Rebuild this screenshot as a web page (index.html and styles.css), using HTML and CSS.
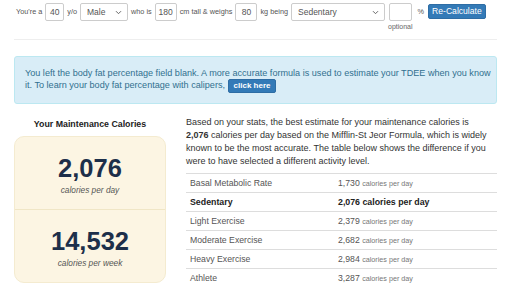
FILE: index.html
```html
<!DOCTYPE html>
<html lang="en">

<head>
    <meta charset="UTF-8">
    <title>TDEE Calculator</title>
    <link rel="stylesheet" href="styles.css">
</head>

<body>
    <div class="page">
        <!--计算表单-->
        <form class="calc">
            <span class="lbl">You're a</span>
            <input class="field w-age" type="text" value="40">
            <span class="lbl">y/o</span>
            <div class="select w-sex">
                <span>Male</span>
                <svg width="7" height="5" viewBox="0 0 7 5"><path d="M1 1.2 3.5 3.7 6 1.2" fill="none" stroke="#666" stroke-width="1"/></svg>
            </div>
            <span class="lbl">who is</span>
            <input class="field w-num" type="text" value="180">
            <span class="lbl">cm tall &amp; weighs</span>
            <input class="field w-num" type="text" value="80">
            <span class="lbl">kg being</span>
            <div class="select w-act">
                <span>Sedentary</span>
                <svg width="7" height="5" viewBox="0 0 7 5"><path d="M1 1.2 3.5 3.7 6 1.2" fill="none" stroke="#666" stroke-width="1"/></svg>
            </div>
            <div class="opt">
                <input class="field w-fat" type="text" value="">
                <span class="opt-note">optional</span>
            </div>
            <span class="lbl pct">%</span>
            <button class="btn btn-calc" type="button">Re-Calculate</button>
        </form>

        <hr class="rule">

        <div class="alert">
            You left the body fat percentage field blank. A more accurate formula is used to estimate your TDEE when you know<br>
            it. To learn your body fat percentage with calipers, <a class="btn btn-small" href="#">click here</a>
        </div>

        <div class="result">
            <!--左边的卡片-->
            <div class="side">
                <h4>Your Maintenance Calories</h4>
                <div class="card">
                    <div class="card-part">
                        <div class="big">2,076</div>
                        <div class="unit">calories per day</div>
                    </div>
                    <div class="card-part">
                        <div class="big">14,532</div>
                        <div class="unit">calories per week</div>
                    </div>
                </div>
            </div>
            <!--右边的说明和表格-->
            <div class="main">
                <p>Based on your stats, the best estimate for your maintenance calories is
                    <b>2,076</b> calories per day based on the Mifflin-St Jeor Formula, which is widely
                    known to be the most accurate. The table below shows the difference if you
                    were to have selected a different activity level.</p>
                <table class="levels">
                    <tr><td>Basal Metabolic Rate</td><td>1,730 <small>calories per day</small></td></tr>
                    <tr class="current"><td>Sedentary</td><td>2,076 calories per day</td></tr>
                    <tr><td>Light Exercise</td><td>2,379 <small>calories per day</small></td></tr>
                    <tr><td>Moderate Exercise</td><td>2,682 <small>calories per day</small></td></tr>
                    <tr><td>Heavy Exercise</td><td>2,984 <small>calories per day</small></td></tr>
                    <tr><td>Athlete</td><td>3,287 <small>calories per day</small></td></tr>
                </table>
            </div>
        </div>
    </div>
</body>

</html>
```

FILE: styles.css
```css
* {
    margin: 0;
    padding: 0;
    box-sizing: border-box;
}

body {
    font-family: "Liberation Sans", Arial, sans-serif;
    color: #333;
    background: #fff;
}

.page {
    padding: 3px 15px 0 14px;
}

.calc {
    display: flex;
    align-items: flex-start;
    gap: 3px;
    padding-left: 2px;
    height: 36px;
}

.lbl {
    font-size: 7.3px;
    line-height: 18px;
    color: #555;
}

.pct {
    margin-left: 2px;
}

.field {
    height: 18px;
    border: 1px solid #ccc;
    border-radius: 2px;
    font-family: inherit;
    font-size: 8.5px;
    color: #555;
    text-align: center;
    outline: none;
}

.w-age {
    width: 19px;
}

.w-num {
    width: 22px;
}

.w-fat {
    width: 23px;
}

.select {
    height: 18px;
    border: 1px solid #ccc;
    border-radius: 2px;
    display: flex;
    align-items: center;
    justify-content: space-between;
    padding: 0 5px 0 6px;
    font-size: 8.5px;
    color: #555;
}

.w-sex {
    width: 48px;
}

.w-act {
    width: 94px;
}

.opt {
    display: flex;
    flex-direction: column;
    align-items: center;
}

.opt-note {
    font-size: 7px;
    color: #666;
    margin-top: 2px;
}

.btn {
    background-color: #337ab7;
    border: 1px solid #2e6da4;
    color: #fff;
    border-radius: 2px;
    font-family: inherit;
}

.btn-calc {
    height: 15px;
    margin-top: 1px;
    margin-left: 1px;
    padding: 0 3px;
    font-size: 8.6px;
    line-height: 13px;
}

.rule {
    border: 0;
    border-top: 1px solid #eee;
}

.alert {
    margin-top: 16px;
    background-color: #d9edf7;
    border: 1px solid #bce8f1;
    border-radius: 3px;
    color: #31708f;
    font-size: 9.1px;
    line-height: 12px;
    padding: 10px 2px 10px 10px;
    height: 48px;
}

.btn-small {
    display: inline-block;
    vertical-align: middle;
    text-decoration: none;
    font-size: 8px;
    font-weight: bold;
    line-height: 12px;
    padding: 0 5px;
}

.result {
    display: flex;
    gap: 20px;
    margin-top: 12px;
}

.side {
    width: 152px;
    flex-shrink: 0;
}

.side h4 {
    text-align: center;
    font-size: 8.8px;
    color: #222;
    line-height: 10px;
    margin-top: 3px;
    margin-bottom: 7px;
}

.card {
    background-color: #fcf5e3;
    border: 1px solid #f4ebd0;
    border-radius: 10px;
    height: 147px;
    display: flex;
    flex-direction: column;
}

.card-part {
    flex: 1;
    display: flex;
    flex-direction: column;
    align-items: center;
    justify-content: center;
    padding-top: 2px;
}

.card-part + .card-part {
    border-top: 1px solid #f0e6c6;
}

.big {
    font-size: 25.5px;
    font-weight: bold;
    color: #1d2f4a;
    line-height: 28px;
}

.unit {
    font-size: 8.3px;
    font-style: italic;
    color: #555;
    margin-top: 3px;
}

.main {
    flex: 1;
}

.main p {
    font-size: 9px;
    line-height: 13px;
    color: #333;
    padding-right: 8px;
}

.levels {
    width: 100%;
    border-collapse: collapse;
    margin-top: 5px;
    font-size: 8.7px;
    color: #555;
}

.levels td {
    border-top: 1px solid #ddd;
    height: 19px;
    padding: 0 4px;
}

.levels td:first-child {
    width: 148px;
}

.levels small {
    font-size: 7.2px;
    color: #777;
}

.levels .current td {
    font-weight: bold;
    color: #222;
    font-size: 8.8px;
}
```
